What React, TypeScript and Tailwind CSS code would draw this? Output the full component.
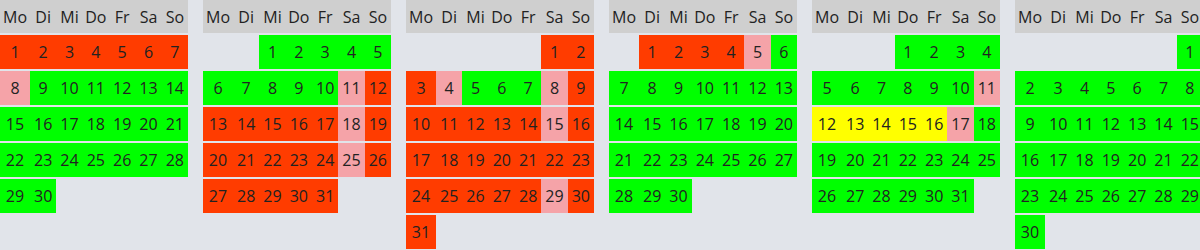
const WEEKDAYS = ["Mo", "Di", "Mi", "Do", "Fr", "Sa", "So"];

type Status = "free" | "busy" | "partial" | "option";

const statusClass: Record<Status, string> = {
  free: "bg-[#00ff00]",
  busy: "bg-[#ff3c00]",
  partial: "bg-[#f5a3a8]",
  option: "bg-[#ffff00]",
};

type Month = {
  offset: number;
  days: number;
  base: Status;
  ranges: [number, number, Status][];
};

const months: Month[] = [
  {
    offset: 0,
    days: 30,
    base: "free",
    ranges: [
      [1, 7, "busy"],
      [8, 8, "partial"],
    ],
  },
  {
    offset: 2,
    days: 31,
    base: "busy",
    ranges: [
      [1, 10, "free"],
      [11, 11, "partial"],
      [18, 18, "partial"],
      [25, 25, "partial"],
    ],
  },
  {
    offset: 5,
    days: 31,
    base: "busy",
    ranges: [
      [4, 4, "partial"],
      [5, 7, "free"],
      [8, 8, "partial"],
      [15, 15, "partial"],
      [29, 29, "partial"],
    ],
  },
  {
    offset: 1,
    days: 30,
    base: "free",
    ranges: [
      [1, 4, "busy"],
      [5, 5, "partial"],
    ],
  },
  {
    offset: 3,
    days: 31,
    base: "free",
    ranges: [
      [11, 11, "partial"],
      [12, 16, "option"],
      [17, 17, "partial"],
    ],
  },
  {
    offset: 6,
    days: 30,
    base: "free",
    ranges: [],
  },
];

const statusFor = (month: Month, day: number): Status => {
  const hit = month.ranges.find(([from, to]) => day >= from && day <= to);
  return hit ? hit[2] : month.base;
};

const MonthTable = ({ month }: { month: Month }) => {
  const cells: (number | null)[] = [
    ...Array.from({ length: month.offset }, () => null),
    ...Array.from({ length: month.days }, (_, i) => i + 1),
  ];
  const weeks: (number | null)[][] = [];
  for (let i = 0; i < cells.length; i += 7) {
    weeks.push(cells.slice(i, i + 7));
  }

  return (
    <div className="flex w-[188px] shrink-0 flex-col gap-[2px]">
      <div className="grid h-[33px] grid-cols-[30px_repeat(6,1fr)] items-center bg-[#cfcfcf]">
        {WEEKDAYS.map((d) => (
          <span key={d} className="text-center">
            {d}
          </span>
        ))}
      </div>
      {weeks.map((week, w) => (
        <div key={w} className="grid h-[34px] grid-cols-[30px_repeat(6,1fr)]">
          {week.map((day, i) =>
            day ? (
              <div
                key={i}
                className={`flex items-center justify-center ${statusClass[statusFor(month, day)]}`}
              >
                {day}
              </div>
            ) : (
              <div key={i} />
            ),
          )}
        </div>
      ))}
    </div>
  );
};

export default function App() {
  return (
    <div className="h-[250px] w-[1200px] overflow-hidden bg-[#e1e4ea] font-['Open_Sans',sans-serif] text-[16px] leading-none text-[#222]">
      <div className="flex gap-[15px]">
        {months.map((m, i) => (
          <MonthTable key={i} month={m} />
        ))}
      </div>
    </div>
  );
}
